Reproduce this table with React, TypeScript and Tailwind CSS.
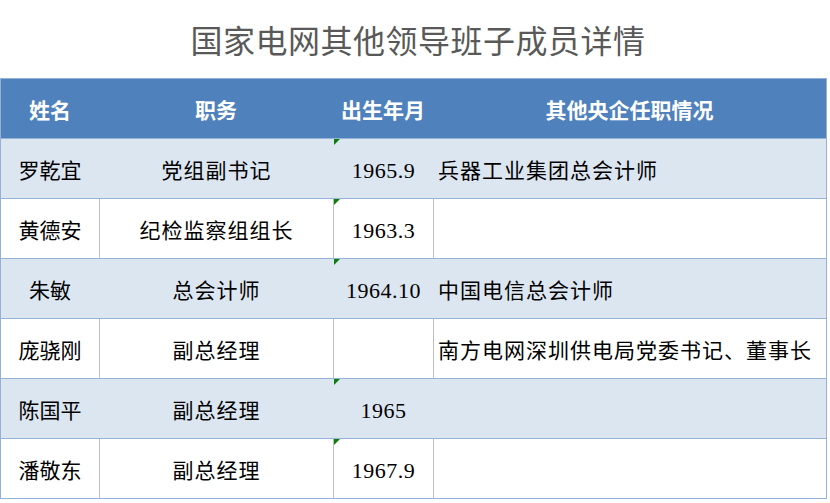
import React from "react";

interface Member {
  name: string;
  post: string;
  birth: string;
  other: string;
  flag: boolean;
}

const members: Member[] = [
  { name: "罗乾宜", post: "党组副书记", birth: "1965.9", other: "兵器工业集团总会计师", flag: true },
  { name: "黄德安", post: "纪检监察组组长", birth: "1963.3", other: "", flag: true },
  { name: "朱敏", post: "总会计师", birth: "1964.10", other: "中国电信总会计师", flag: true },
  { name: "庞骁刚", post: "副总经理", birth: "", other: "南方电网深圳供电局党委书记、董事长", flag: false },
  { name: "陈国平", post: "副总经理", birth: "1965", other: "", flag: true },
  { name: "潘敬东", post: "副总经理", birth: "1967.9", other: "", flag: true },
];

const cjk = "font-['Noto_Sans_CJK_SC',sans-serif]";

const Flag = () => (
  <svg className="absolute left-0 top-0" width="6" height="6" viewBox="0 0 6 6">
    <path d="M0 0H6L0 6Z" fill="#0a7d0a" />
  </svg>
);

export default function App(): JSX.Element {
  return (
    <div className={`w-[830px] h-[503px] bg-white overflow-hidden ${cjk}`}>
      <div className="h-[78px] flex items-center justify-center">
        <h1 className="text-[32px] leading-none text-[#595959] pl-[6px] tracking-[0.5px]">
          国家电网其他领导班子成员详情
        </h1>
      </div>
      <div className="w-[827px] border-x border-b border-[#95B3D7]">
        <div className="h-[60px] border-t border-[#95B3D7] bg-[#4F81BD] grid grid-cols-[98px_234px_100px_393px] text-white text-[21px] font-bold">
          <div className="flex items-center justify-center pt-[3px]">姓名</div>
          <div className="flex items-center justify-center pt-[3px]">职务</div>
          <div className="flex items-center justify-center pt-[3px]">出生年月</div>
          <div className="flex items-center justify-center pt-[3px]">其他央企任职情况</div>
        </div>
        {members.map((m, i) => {
          const shaded = i % 2 === 0;
          const line = shaded ? "border-l border-transparent" : "border-l border-[#BFBFBF]";
          return (
            <div
              key={i}
              className={`h-[60px] border-t border-[#95B3D7] grid grid-cols-[98px_234px_100px_393px] text-[21px] text-black ${
                shaded ? "bg-[#DCE6F1]" : "bg-white"
              }`}
            >
              <div className="flex items-center justify-center pt-[3px]">{m.name}</div>
              <div className={`flex items-center justify-center pt-[3px] tracking-[1px] ${line}`}>{m.post}</div>
              <div
                className={`relative flex items-center justify-center pt-[3px] font-['Liberation_Serif',serif] text-[22px] tracking-[0.5px] ${line}`}
              >
                {m.flag && <Flag />}
                {m.birth}
              </div>
              <div className={`flex items-center pl-[4px] pt-[3px] tracking-[1px] ${line}`}>{m.other}</div>
            </div>
          );
        })}
      </div>
    </div>
  );
}
